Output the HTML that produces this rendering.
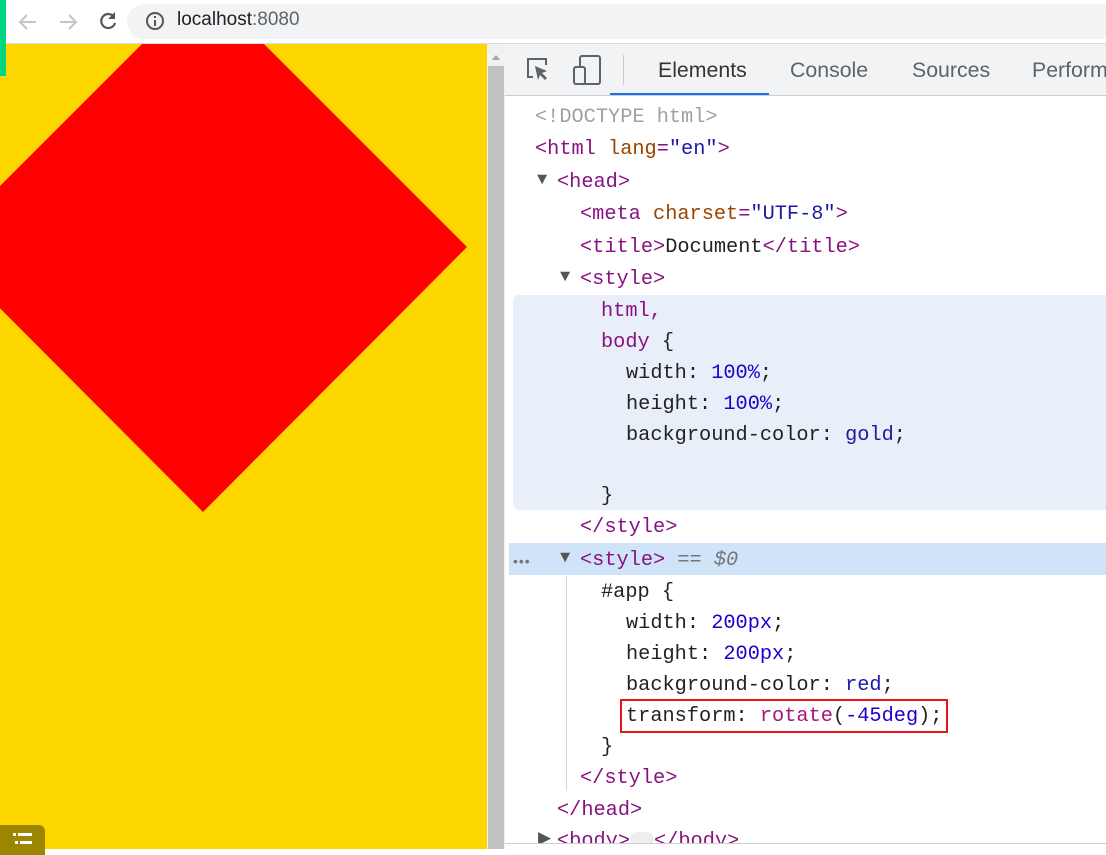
<!DOCTYPE html>
<html><head><meta charset="utf-8"><style>
body{margin:0;width:1106px;height:849px;overflow:hidden;position:relative;background:#fff;font-family:"Liberation Sans",sans-serif}
.a{position:absolute}
.code{position:absolute;font-family:"Liberation Mono",monospace;font-size:20.3px;white-space:pre;line-height:24px;color:#222;margin-top:2px}
.t{color:#881280}.n{color:#994500}.v{color:#1a1aa6}.g{color:#a0a0a0}.b{color:#1c00cf}
.tri{font-size:17px;color:#555}
</style></head><body>
<div class="a" style="left:0;top:0;width:1106px;height:43px;background:#fff;border-bottom:1px solid #dadce0"></div>
<div class="a" style="left:0;top:0;width:6px;height:76px;background:#00d67f;z-index:3"></div>
<svg class="a" style="top:10px;left:16px" width="24" height="24" viewBox="0 0 24 24"><path d="M20 12H5M11 5l-7 7 7 7" stroke="#c4c4c4" stroke-width="2" fill="none"/></svg>
<svg class="a" style="left:56px;top:10px" width="24" height="24" viewBox="0 0 24 24"><path d="M4 12h15M13 5l7 7-7 7" stroke="#c4c4c4" stroke-width="2" fill="none"/></svg>
<svg class="a" style="left:96px;top:9px" width="24" height="24" viewBox="0 0 24 24"><path d="M18 8A7 7 0 1 0 19 14" stroke="#555" stroke-width="2.2" fill="none"/><path d="M19 3v7h-7z" fill="#555"/></svg>
<div class="a" style="left:127px;top:4px;width:990px;height:35px;border-radius:18px;background:#f1f3f4"></div>
<svg class="a" style="left:145px;top:11px" width="20" height="20" viewBox="0 0 20 20"><circle cx="10" cy="10" r="8" stroke="#555" stroke-width="2" fill="none"/><rect x="9" y="9" width="2" height="6" fill="#555"/><rect x="9" y="5" width="2" height="2" fill="#555"/></svg>
<div class="a" style="left:177px;top:9px;font-size:19px;color:#202124">localhost<span style="color:#5f6368">:8080</span></div>
<div class="a" style="left:0;top:44px;width:487px;height:805px;background:#ffd700;overflow:hidden">
<svg width="487" height="805" style="display:block"><polygon points="203,-61 467,203 203,468 -61,203" fill="#f00"/></svg>
</div>
<div class="a" style="left:0;top:825px;width:45px;height:30px;border-radius:0 6px 0 0;background:#9c8500"></div>
<div class="a" style="left:13px;top:833px;width:3px;height:3px;background:#fff"></div>
<div class="a" style="left:18px;top:833px;width:14px;height:3px;background:#fff"></div>
<div class="a" style="left:15px;top:841px;width:3px;height:3px;background:#fff"></div>
<div class="a" style="left:20px;top:841px;width:12px;height:3px;background:#fff"></div>
<div class="a" style="left:487px;top:44px;width:18px;height:805px;background:#f1f1f1"></div>
<div class="a" style="left:488px;top:66px;width:16px;height:783px;background:#c1c1c1"></div>
<div class="a" style="left:492px;top:55px;width:0;height:0;border-left:4px solid transparent;border-right:4px solid transparent;border-bottom:5px solid #a3a3a3"></div>
<div class="a" style="left:505px;top:44px;width:601px;height:51px;background:#f1f3f4;border-bottom:1px solid #cbcdd1"></div>
<svg class="a" style="left:524px;top:56px" width="28" height="28" viewBox="0 0 28 28"><path d="M9 21H4V3h18v6" stroke="#5f6368" stroke-width="2" fill="none"/><path d="M11 10l12 5-5 2 5 5-2 2-5-5-2 5z" fill="#5f6368"/></svg>
<svg class="a" style="left:572px;top:54px" width="30" height="32" viewBox="0 0 30 32"><rect x="8" y="2" width="20" height="28" rx="2" stroke="#5f6368" stroke-width="2" fill="none"/><rect x="2" y="13" width="11" height="17" rx="2" stroke="#5f6368" stroke-width="2" fill="#f1f3f4"/></svg>
<div class="a" style="left:623px;top:55px;width:1px;height:30px;background:#ccc"></div>
<div class="a" style="left:658px;top:58px;font-size:21.3px;color:#333">Elements</div>
<div class="a" style="left:610px;top:93px;width:159px;height:2px;background:#1a73e8"></div>
<div class="a" style="left:790px;top:58px;font-size:21.3px;color:#5f6368">Console</div>
<div class="a" style="left:912px;top:58px;font-size:21.3px;color:#5f6368">Sources</div>
<div class="a" style="left:1032px;top:58px;font-size:21.3px;color:#5f6368">Perform</div>
<div class="a" style="left:513px;top:295px;width:600px;height:215px;background:#e9eff9;border-radius:6px"></div>
<div class="a" style="left:509px;top:543px;width:597px;height:32px;background:#cfe3f9"></div>
<div class="a" style="left:566px;top:576px;width:1px;height:215px;background:#c6d6ec"></div>
<div class="a" style="left:513px;top:553px;font-size:14px;color:#777;letter-spacing:1px">•••</div>
<div class="code g" style="left:535px;top:104px">&lt;!DOCTYPE html&gt;</div>
<div class="code" style="left:535px;top:136px"><span class="t">&lt;html</span> <span class="n">lang</span><span class="t">=</span><span class="v">"en"</span><span class="t">&gt;</span></div>
<div class="code tri" style="left:537px;top:167px">▼</div>
<div class="code t" style="left:557px;top:169px">&lt;head&gt;</div>
<div class="code" style="left:580px;top:201px"><span class="t">&lt;meta</span> <span class="n">charset</span><span class="t">=</span><span class="v">"UTF-8"</span><span class="t">&gt;</span></div>
<div class="code" style="left:580px;top:234px"><span class="t">&lt;title&gt;</span>Document<span class="t">&lt;/title&gt;</span></div>
<div class="code tri" style="left:560px;top:264px">▼</div>
<div class="code t" style="left:580px;top:266px">&lt;style&gt;</div>
<div class="code t" style="left:601px;top:298px">html,</div>
<div class="code" style="left:601px;top:329px"><span class="t">body</span> {</div>
<div class="code" style="left:626px;top:360px">width: <span class="b">100%</span>;</div>
<div class="code" style="left:626px;top:391px">height: <span class="b">100%</span>;</div>
<div class="code" style="left:626px;top:422px">background-color: <span class="v">gold</span>;</div>
<div class="code" style="left:601px;top:483px">}</div>
<div class="code t" style="left:580px;top:514px">&lt;/style&gt;</div>
<div class="code tri" style="left:560px;top:545px">▼</div>
<div class="code" style="left:580px;top:547px"><span class="t">&lt;style&gt;</span> <i style="color:#777">== $0</i></div>
<div class="code" style="left:601px;top:579px">#app {</div>
<div class="code" style="left:626px;top:610px">width: <span class="b">200px</span>;</div>
<div class="code" style="left:626px;top:641px">height: <span class="b">200px</span>;</div>
<div class="code" style="left:626px;top:672px">background-color: <span class="v">red</span>;</div>
<div class="a" style="left:620px;top:699px;width:324px;height:30px;border:2px solid #e8141d"></div>
<div class="code" style="left:626px;top:703px">transform: <span style="color:#a5157a">rotate</span>(<span class="b">-45deg</span>);</div>
<div class="code" style="left:601px;top:734px">}</div>
<div class="code t" style="left:580px;top:765px">&lt;/style&gt;</div>
<div class="code t" style="left:557px;top:797px">&lt;/head&gt;</div>
<div class="code tri" style="left:538px;top:826px">▶</div>
<div class="code t" style="left:557px;top:828px">&lt;body&gt;<span style="display:inline-block;width:24px;height:14px;background:#eee;border-radius:7px"></span>&lt;/body&gt;</div>
<div class="a" style="left:505px;top:843px;width:601px;height:6px;background:#fff;border-top:1px solid #cbcdd1"></div>
</body></html>
